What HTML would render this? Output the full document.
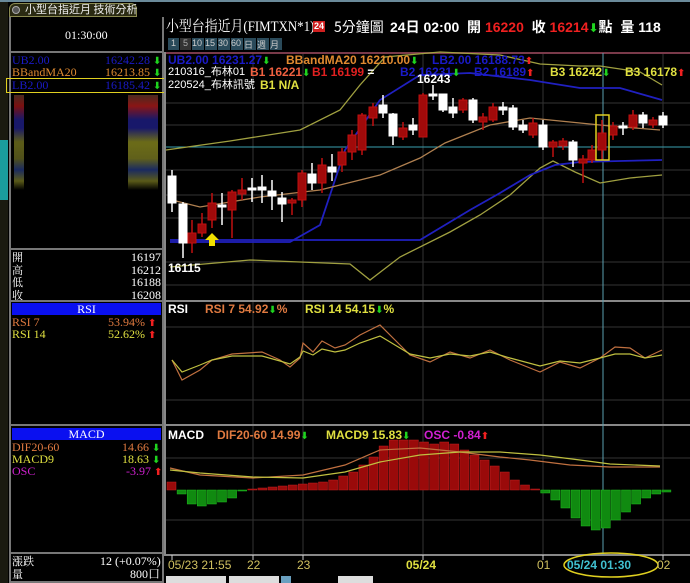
<!DOCTYPE html>
<html><head><meta charset="utf-8">
<style>
*{margin:0;padding:0;box-sizing:border-box}
body{width:690px;height:583px;background:#000;overflow:hidden;position:relative;font-family:"Liberation Serif","Noto Serif CJK SC",serif;color:#fff}
.a{position:absolute;white-space:nowrap}
.s{font-family:"Liberation Sans","Noto Sans CJK TC",sans-serif;font-weight:bold}
.t{font-size:12px;line-height:13px}
.g{color:#1ed41e;font-family:"DejaVu Sans",sans-serif;font-weight:bold;font-size:10px}
.r{color:#f02020}
.ra{color:#f02020;font-family:"DejaVu Sans",sans-serif;font-weight:bold;font-size:10px}
</style></head><body>
<div class="a" style="left:0;top:0;width:8px;height:583px;background:#1a1a10"></div>
<div class="a" style="left:0;top:140px;width:8px;height:60px;background:#1a9d9d"></div>
<div class="a" style="left:0;top:0;width:690px;height:2px;background:#6a8a9a"></div>
<div class="a" style="left:9px;top:3px;width:128px;height:14px;background:#2a2a12;border:1px solid #8a8a50;border-radius:6px 6px 0 0"></div>
<div class="a" style="left:12px;top:6px;width:8px;height:8px;border-radius:50%;background:#555;border:1px solid #aaa"></div>
<div class="a" style="left:25px;top:3px;font-size:11px;color:#eee;font-family:'Noto Sans CJK TC',sans-serif;line-height:13px">小型台指近月 技術分析</div>
<div class="a" style="left:9px;top:17px;width:155px;height:566px;border:2px solid #777;border-top:none"></div>
<div class="a" style="left:11px;top:18px;width:151px;height:35px;border-bottom:2px solid #777"></div>
<div class="a t" style="left:65px;top:29px">01:30:00</div>
<div class="a t" style="left:12px;top:54px;color:#1a1ac8">UB2.00</div><div class="a t" style="left:105px;top:54px;color:#1a1ac8">16242.28 <span class="g">⬇</span></div>
<div class="a t" style="left:12px;top:66px;color:#e08a30">BBandMA20</div><div class="a t" style="left:105px;top:66px;color:#e08a30">16213.85 <span class="g">⬇</span></div>
<div class="a" style="left:6px;top:78px;width:160px;height:15px;border:1px solid #e0d020"></div>
<div class="a t" style="left:12px;top:79px;color:#1a1ac8">LB2.00</div><div class="a t" style="left:105px;top:79px;color:#1a1ac8">16185.42 <span class="g">⬇</span></div>
<div class="a" style="left:14px;top:95px;width:10px;height:55px;background:linear-gradient(#4a2a20,#7a1010 20%,#18186a 45%,#18186a 60%,#5a5a18 85%)"></div>
<div class="a" style="left:128px;top:95px;width:30px;height:55px;background:linear-gradient(#4a2a20,#8a1515 20%,#18186a 45%,#18186a 60%,#6a6a18 85%)"></div>
<div class="a" style="left:14px;top:145px;width:10px;height:45px;background:linear-gradient(#5a5a18,#50501a 30%,#1a2a60 55%,#5a5a18 80%,#000)"></div>
<div class="a" style="left:128px;top:145px;width:30px;height:45px;background:linear-gradient(#6a6a18,#60601a 30%,#1a2a60 55%,#5a5a18 80%,#000)"></div>
<div class="a" style="left:11px;top:248px;width:151px;height:2px;background:#777"></div>
<div class="a t" style="left:12px;top:251px;font-family:'Noto Serif CJK SC',serif;font-size:11px;line-height:12.5px">開<br>高<br>低<br>收</div>
<div class="a t" style="left:125px;top:251px;line-height:12.5px;text-align:right;width:36px">16197<br>16212<br>16188<br>16208</div>
<div class="a" style="left:11px;top:300px;width:151px;height:2px;background:#777"></div>
<div class="a t" style="left:12px;top:303px;width:149px;height:12px;background:#0a10f0;text-align:center;line-height:12px">RSI</div>
<div class="a t" style="left:12px;top:316px;color:#e07a40">RSI 7</div><div class="a t" style="left:108px;top:316px;color:#e07a40">53.94% <span class="ra">⬆</span></div>
<div class="a t" style="left:12px;top:328px;color:#e0e040">RSI 14</div><div class="a t" style="left:108px;top:328px;color:#e0e040">52.62% <span class="ra">⬆</span></div>
<div class="a" style="left:11px;top:424px;width:151px;height:2px;background:#777"></div>
<div class="a t" style="left:12px;top:428px;width:149px;height:12px;background:#0a10f0;text-align:center;line-height:12px">MACD</div>
<div class="a t" style="left:12px;top:441px;color:#e07a40">DIF20-60</div><div class="a t" style="left:122px;top:441px;color:#e07a40">14.66 <span class="g">⬇</span></div>
<div class="a t" style="left:12px;top:453px;color:#e0e040">MACD9</div><div class="a t" style="left:122px;top:453px;color:#e0e040">18.63 <span class="g">⬇</span></div>
<div class="a t" style="left:12px;top:465px;color:#d020d0">OSC</div><div class="a t" style="left:126px;top:465px;color:#d020d0">-3.97 <span class="ra">⬆</span></div>
<div class="a" style="left:11px;top:552px;width:151px;height:2px;background:#777"></div>
<div class="a t" style="left:12px;top:555px;font-family:'Noto Serif CJK SC',serif;font-size:11px">漲跌<br>量</div>
<div class="a t" style="left:100px;top:555px">12 (+0.07%)</div>
<div class="a t" style="left:130px;top:568px">800口</div>

<div class="a" style="left:166px;top:18px;font-size:15px;line-height:18px;transform:scaleX(0.86);transform-origin:left">小型台指近月(FIMTXN*1)</div>
<div class="a s" style="left:313px;top:21px;width:12px;height:11px;background:#d02020;font-size:9px;line-height:11px;text-align:center">24</div>
<div class="a" style="left:334px;top:19px;font-size:14px;font-family:'Noto Sans CJK TC',sans-serif;line-height:17px">5分鐘圖</div>
<div class="a s" style="left:390px;top:19px;font-size:14px;line-height:17px">24日 02:00 &nbsp;開 <span class="r">16220</span> &nbsp;收 <span class="r">16214</span><span class="g" style="font-size:12px">⬇</span>點 &nbsp;量 118</div>
<div class="a" style="left:168px;top:38px;display:flex;gap:1px">
<span style="width:11px;height:12px;background:#2a4a5a;font-size:9px;text-align:center;color:#ccc;font-family:sans-serif">1</span><span style="width:11px;height:12px;background:#333;font-size:9px;text-align:center;color:#aaa;font-family:sans-serif">5</span><span style="width:12px;height:12px;background:#2a4a5a;font-size:9px;color:#ccc;font-family:sans-serif">10</span><span style="width:12px;height:12px;background:#2a4a5a;font-size:9px;color:#ccc;font-family:sans-serif">15</span><span style="width:12px;height:12px;background:#2a4a5a;font-size:9px;color:#ccc;font-family:sans-serif">30</span><span style="width:12px;height:12px;background:#2a4a5a;font-size:9px;color:#ccc;font-family:sans-serif">60</span><span style="width:12px;height:12px;background:#2a4a5a;font-size:9px;color:#ccc;font-family:sans-serif">日</span><span style="width:12px;height:12px;background:#2a4a5a;font-size:9px;color:#ccc;font-family:sans-serif">週</span><span style="width:12px;height:12px;background:#2a4a5a;font-size:9px;color:#ccc;font-family:sans-serif">月</span></div>

<svg class="a" style="left:0;top:0" width="690" height="583">
<g stroke="#333" stroke-width="1">
<line x1="166" y1="103" x2="690" y2="103"/><line x1="166" y1="125" x2="690" y2="125"/><line x1="166" y1="170" x2="690" y2="170"/><line x1="166" y1="195" x2="690" y2="195"/><line x1="166" y1="218" x2="690" y2="218"/><line x1="166" y1="262" x2="690" y2="262"/><line x1="166" y1="285" x2="690" y2="285"/>
<line x1="166" y1="327" x2="690" y2="327"/><line x1="166" y1="400" x2="690" y2="400"/>
<line x1="166" y1="458" x2="690" y2="458"/><line x1="166" y1="520" x2="690" y2="520"/>
<line x1="253" y1="53" x2="253" y2="555"/><line x1="303" y1="53" x2="303" y2="555"/><line x1="423" y1="53" x2="423" y2="555"/><line x1="543" y1="53" x2="543" y2="555"/><line x1="663" y1="53" x2="663" y2="555"/>
</g>
<g stroke="#888" stroke-width="2" fill="none">
<line x1="165" y1="52" x2="165" y2="556"/><line x1="165" y1="301" x2="690" y2="301"/><line x1="165" y1="425" x2="690" y2="425"/><line x1="165" y1="555" x2="690" y2="555"/>
</g>
<line x1="166" y1="53" x2="690" y2="53" stroke="#7a3a4a" stroke-width="2"/>
<line x1="166" y1="147" x2="690" y2="147" stroke="#3aa0b0"/>
<line x1="603" y1="53" x2="603" y2="555" stroke="#5aa0b0"/>
<g fill="none" stroke-width="1.3">
<polyline stroke="#a0a040" points="166,150 230,141 300,130 340,110 360,85 385,57 440,52 500,55 540,64 580,66 600,66 640,72 662,85"/>
<polyline stroke="#a0a040" points="170,267 250,260 300,262 350,264 370,280 400,257 450,232 480,215 510,195 540,168 553,161 575,172 600,183 630,178 662,175"/>
<polyline stroke="#2020c0" stroke-width="1.8" points="170,242 290,242 320,225 345,150 380,100 420,75 470,73 530,80 580,88 620,88 662,100"/>
<polyline stroke="#2020c0" stroke-width="1.8" points="170,240 250,240 350,240 420,240 470,210 500,193 530,175 555,165 580,162 620,161 662,160"/>
<polyline stroke="#b08050" points="172,200 200,207 260,197 320,190 380,175 420,158 445,143 490,125 530,118 570,122 610,126 660,130"/>
</g>
<g id="cd"></g>
<rect x="596" y="115" width="13" height="45" fill="none" stroke="#e0d020" stroke-width="1.5"/>
<polygon points="212,233 219,240 215,240 215,246 209,246 209,240 205,240" fill="#f0e000"/>
<g fill="none" stroke-width="1.2">
<polyline stroke="#c07040" points="172,360 182,380 200,370 212,360 232,354 262,352 280,360 290,367 300,358 303,343 313,352 322,341 335,348 345,345 360,335 380,325 395,340 410,355 430,362 450,352 470,358 490,350 510,360 540,372 560,362 580,368 600,358 615,347 630,348 645,358 662,350"/>
<polyline stroke="#c0c040" points="172,360 182,372 200,365 212,360 232,356 262,356 280,361 290,364 300,357 303,351 313,355 322,349 335,352 345,350 360,343 380,336 395,345 410,354 430,358 450,354 470,356 490,352 510,358 540,366 560,361 580,363 600,358 615,354 630,354 645,358 662,355"/>
</g>
<g id="mb"></g>
<g fill="none" stroke-width="1.2">
<polyline stroke="#c07040" points="170,468 200,475 253,478 303,475 345,465 380,450 420,448 460,452 500,457 530,460 570,465 610,467 660,467"/>
<polyline stroke="#c0c040" points="170,470 200,473 253,477 303,478 345,472 380,462 420,455 460,452 500,452 540,455 580,460 610,464 660,466"/>
</g>
<g stroke="#ccc"><line x1="172" y1="555" x2="172" y2="560"/><line x1="253" y1="555" x2="253" y2="560"/><line x1="303" y1="555" x2="303" y2="560"/><line x1="423" y1="555" x2="423" y2="560"/><line x1="543" y1="555" x2="543" y2="560"/><line x1="663" y1="555" x2="663" y2="560"/></g>
<ellipse cx="611" cy="565" rx="47" ry="12" fill="none" stroke="#e0d020" stroke-width="1.5"/>
</svg>
<div class="a s t" style="left:168px;top:54px;color:#1a1ac8">UB2.00 16231.27<span class="g">⬇</span></div>
<div class="a s t" style="left:286px;top:54px;color:#e08a30">BBandMA20 16210.00<span class="g">⬇</span></div>
<div class="a s t" style="left:432px;top:54px;color:#1a1ac8">LB2.00 16188.73<span class="ra">⬆</span></div>
<div class="a t" style="left:168px;top:66px;font-family:'Liberation Sans','Noto Sans CJK TC',sans-serif;font-size:11px">210316_布林01</div>
<div class="a s t" style="left:250px;top:66px;color:#f06040">B1 16221<span class="g">⬇</span></div>
<div class="a s t" style="left:312px;top:66px;color:#e02020">B1 16199 <span style="color:#fff">=</span></div>
<div class="a s t" style="left:400px;top:66px;color:#1a1ac8">B2 16231<span class="g">⬇</span></div>
<div class="a s t" style="left:474px;top:66px;color:#1a1ac8">B2 16189<span class="ra">⬆</span></div>
<div class="a s t" style="left:550px;top:66px;color:#e0e040">B3 16242<span class="g">⬇</span></div>
<div class="a s t" style="left:625px;top:66px;color:#e0e040">B3 16178<span class="ra">⬆</span></div>
<div class="a t" style="left:168px;top:79px;font-family:'Liberation Sans','Noto Sans CJK TC',sans-serif;font-size:11px">220524_布林訊號</div>
<div class="a s t" style="left:260px;top:79px;color:#e0e040">B1 N/A</div>
<div class="a s t" style="left:417px;top:73px">16243</div>
<div class="a s t" style="left:168px;top:262px">16115</div>
<div class="a s t" style="left:168px;top:303px">RSI</div>
<div class="a s t" style="left:205px;top:303px;color:#e07a40">RSI 7 54.92<span class="g">⬇</span>%</div>
<div class="a s t" style="left:305px;top:303px;color:#e0e040">RSI 14 54.15<span class="g">⬇</span>%</div>
<div class="a s t" style="left:168px;top:429px">MACD</div>
<div class="a s t" style="left:217px;top:429px;color:#e07a40">DIF20-60 14.99<span class="g">⬇</span></div>
<div class="a s t" style="left:326px;top:429px;color:#e0e040">MACD9 15.83<span class="g">⬇</span></div>
<div class="a s t" style="left:424px;top:429px;color:#d020d0">OSC -0.84<span class="ra">⬆</span></div>
<div class="a s t" style="left:168px;top:559px;color:#d0c060;font-weight:normal">05/23 21:55</div>
<div class="a s t" style="left:247px;top:559px;color:#d0c060;font-weight:normal">22</div>
<div class="a s t" style="left:297px;top:559px;color:#d0c060;font-weight:normal">23</div>
<div class="a s t" style="left:406px;top:559px;color:#e0e040">05/24</div>
<div class="a s t" style="left:537px;top:559px;color:#d0c060;font-weight:normal">01</div>
<div class="a s t" style="left:567px;top:559px;color:#40c0d0">05/24 01:30</div>
<div class="a s t" style="left:657px;top:559px;color:#d0c060;font-weight:normal">02</div>
<div class="a" style="left:166px;top:576px;width:60px;height:7px;background:#ddd"></div>
<div class="a" style="left:229px;top:576px;width:50px;height:7px;background:#ddd"></div>
<div class="a" style="left:281px;top:576px;width:10px;height:7px;background:#6aa0c0"></div>
<div class="a" style="left:338px;top:576px;width:35px;height:7px;background:#ddd"></div>
<script>
var C=[[172,176,203,170,212,0],[183,204,243,202,258,0],[192,233,243,220,253,1],[202,224,233,213,237,1],[212,203,220,193,228,1],[222,205,207,193,225,0],[232,192,210,190,238,1],[242,190,194,178,200,1],[252,188,190,178,202,0],[262,187,190,175,203,0],[272,191,196,180,210,0],[282,198,204,192,222,0],[292,200,203,198,215,1],[302,173,200,170,207,1],[312,174,183,163,190,0],[322,165,183,158,193,1],[332,167,172,154,181,0],[342,152,165,148,172,1],[352,135,152,130,160,1],[362,115,150,113,155,1],[373,107,118,103,126,1],[383,105,113,95,118,0],[393,114,136,113,145,0],[403,128,137,122,140,1],[413,125,130,118,135,0],[423,95,137,93,137,1],[433,94,96,85,100,0],[443,94,110,94,112,0],[453,107,113,98,118,0],[463,100,110,98,113,1],[473,100,120,98,123,0],[483,117,122,113,130,1],[493,107,120,103,122,1],[503,107,110,102,115,0],[513,108,127,105,130,0],[523,125,130,120,133,0],[533,123,135,118,138,1],[543,125,147,120,150,0],[553,142,147,140,157,1],[563,141,146,138,150,1],[573,142,160,140,167,0],[583,159,163,155,183,1],[592,150,160,145,163,1],[602,133,150,120,160,1],[613,126,135,122,140,1],[623,126,127,122,135,0],[633,115,127,110,130,1],[643,115,123,112,128,0],[653,120,125,117,128,1],[663,116,125,112,128,0]];
var h='';C.forEach(function(c){var col=c[5]?'#a00a0a':'#fff';h+='<line x1="'+c[0]+'" y1="'+c[3]+'" x2="'+c[0]+'" y2="'+c[4]+'" stroke="'+(c[5]?'#c01010':'#fff')+'" stroke-width="1.5"/><rect x="'+(c[0]-4)+'" y="'+c[1]+'" width="8" height="'+Math.max(2,c[2]-c[1])+'" fill="'+col+'" stroke="'+(c[5]?'#c01010':'#fff')+'"/>';});
document.getElementById('cd').innerHTML=h;
var M=[8,-4,-14,-16,-14,-12,-8,-1,1,2,3,4,5,6,7,8,10,14,18,25,33,44,50,50,50,48,46,48,46,40,35,30,24,18,10,5,1,-3,-10,-18,-28,-36,-40,-38,-30,-22,-14,-8,-4,-2];
var m='';M.forEach(function(v,i){var x=167+i*10.1,z=490;if(v>=0)m+='<rect x="'+x+'" y="'+(z-v)+'" width="9" height="'+v+'" fill="#9a0a0a" stroke="#c02020" stroke-width=".5"/>';else m+='<rect x="'+x+'" y="'+z+'" width="9" height="'+(-v)+'" fill="#108a10" stroke="#20c020" stroke-width=".5"/>';});
document.getElementById('mb').innerHTML=m;
</script>
</body></html>
